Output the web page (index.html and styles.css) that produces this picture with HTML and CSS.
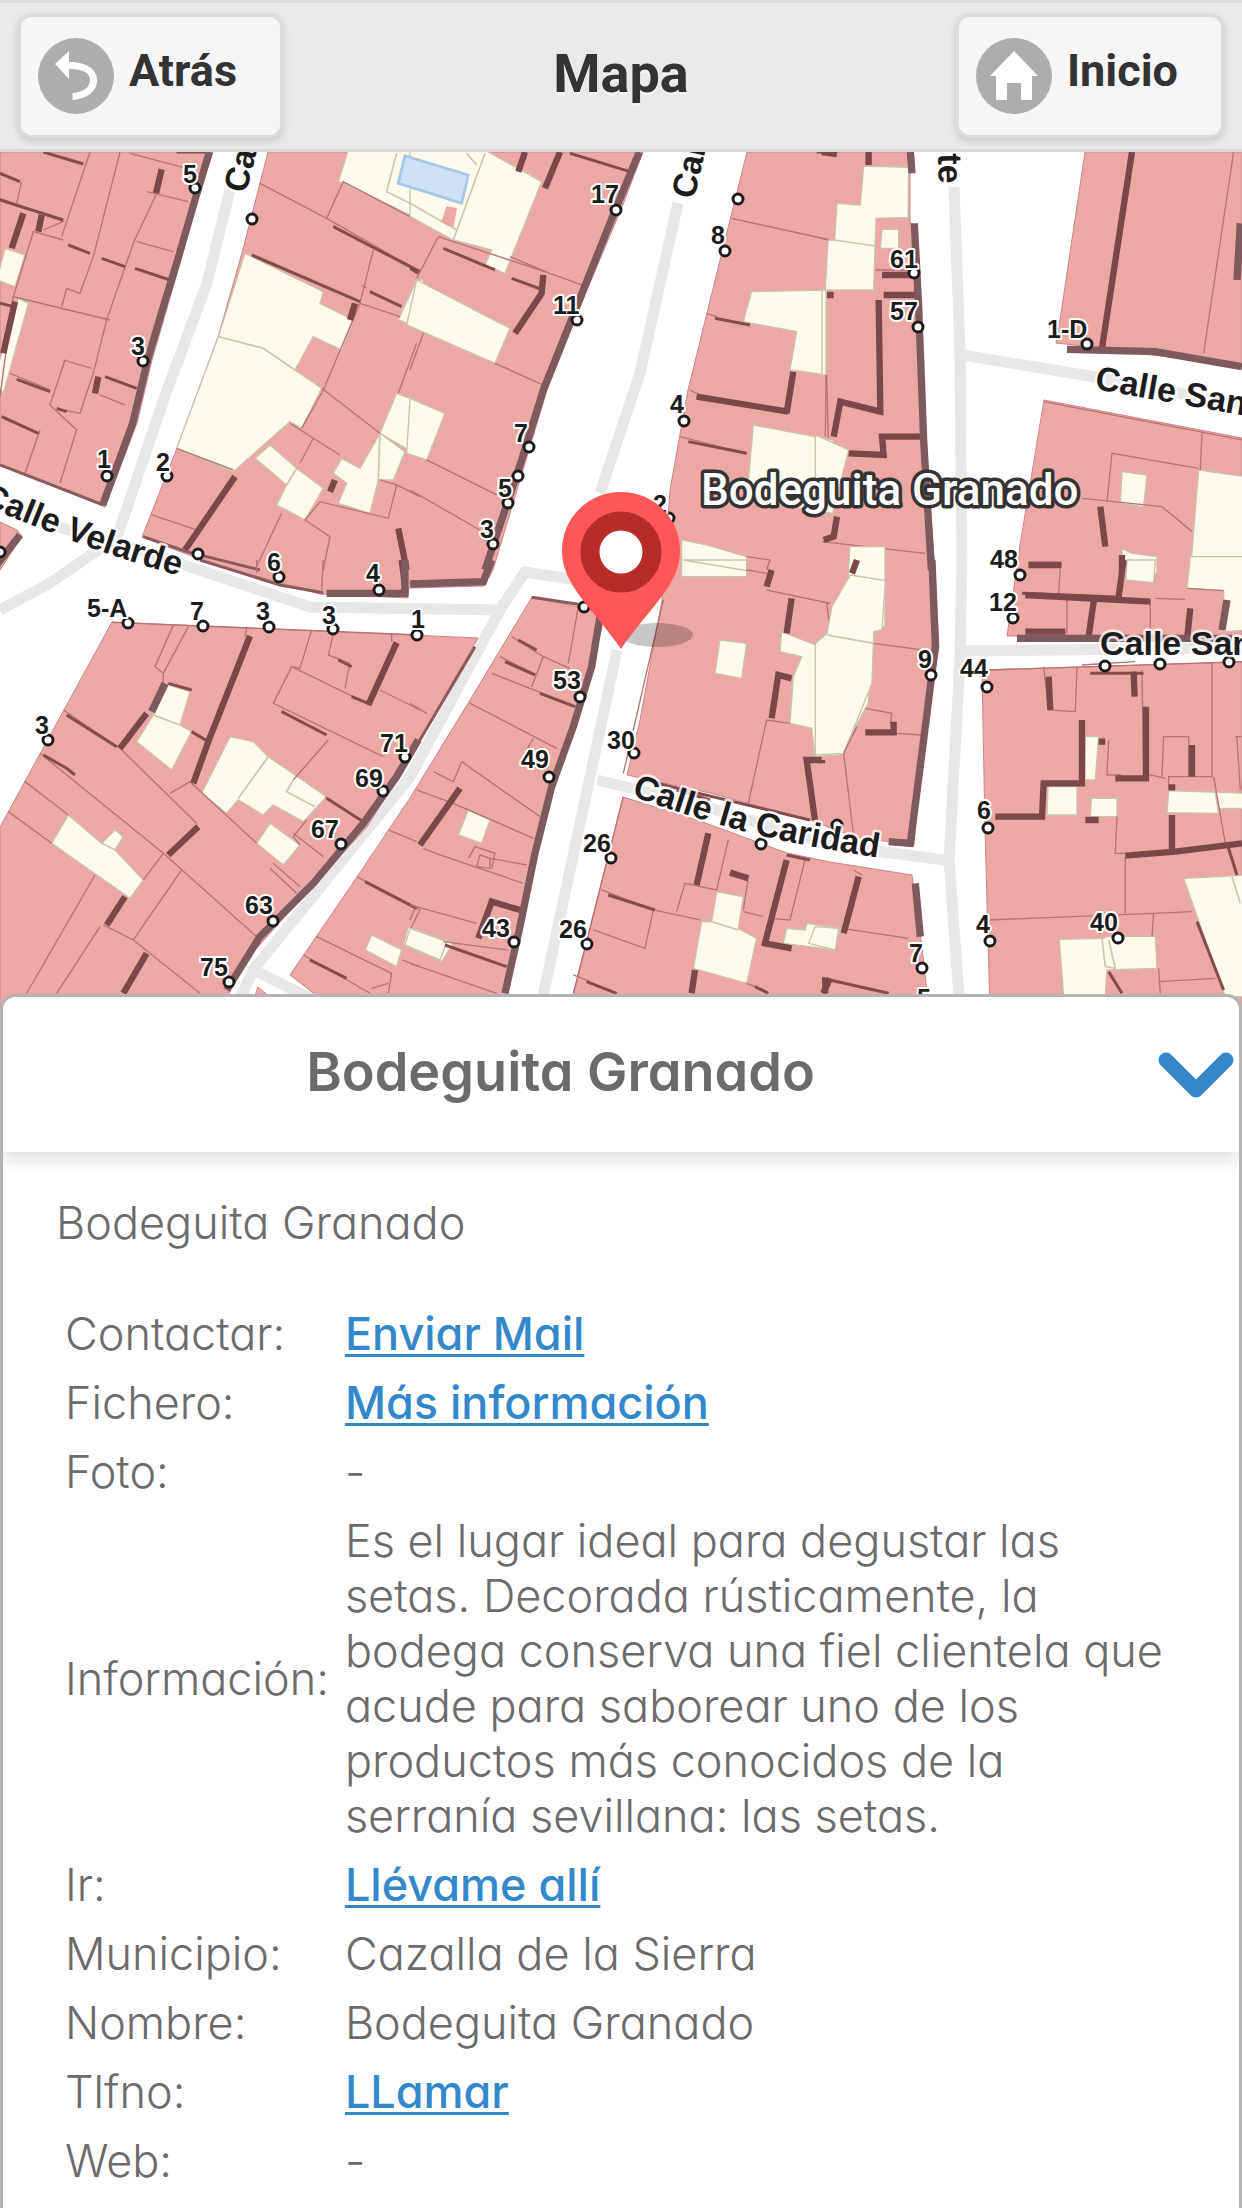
FILE: index.html
```html
<!DOCTYPE html>
<html lang="es">
<head>
<meta charset="utf-8">
<meta name="viewport" content="width=device-width, initial-scale=1">
<title>Mapa</title>
<link rel="stylesheet" href="styles.css">
</head>
<body>
<header class="bar">
  <button class="nav-btn" type="button">
    <svg class="nav-icon" viewBox="0 0 76 76" aria-hidden="true">
      <circle cx="38" cy="38" r="38" fill="#adadad"/>
      <path fill="#fff" d="M17 26 31 13V24C48 24 59 31 59 42C59 54 48 61 34.500 62V55C46 54 52 49 52 42C52 35 46 31 31 31V41Z"/>
    </svg>
    <span class="nav-label">Atrás</span>
  </button>
  <h1 class="bar-title">Mapa</h1>
  <button class="nav-btn nav-end" type="button">
    <svg class="nav-icon" viewBox="0 0 76 76" aria-hidden="true">
      <circle cx="38" cy="38" r="38" fill="#adadad"/>
      <path fill="#fff" d="M38 13 62 38H56V62H45V45H31V62H20V38H14Z"/>
    </svg>
    <span class="nav-label">Inicio</span>
  </button>
</header>

<main>
<section class="map" aria-label="Mapa de calles">
<svg class="map-svg" viewBox="0 152 1242 858" preserveAspectRatio="xMidYMin slice">
  <defs>
    <path id="velarde" d="M-20 504Q60 537 100 551T194 580"/>
    <path id="caridad" d="M631 796Q700 820 750 833T900 861"/>
  </defs>
  <rect y="152" width="1242" height="858" fill="#fff"/>

  <!-- road axes -->
  <g class="road">
    <path d="M230 190 207 283 167 390 117 537 50 583 0 610"/>
    <path d="M40 522 117 543 190 567 310 607 500 610 525 572 577 580 621 590"/>
    <path d="M500 610 410 777 253 970 235 1010M253 970 310 998"/>
    <path d="M678 203 640 373 600 493M617 650 590 777 540 1010"/>
    <path d="M597 780 700 805 830 845 945 860"/>
    <path d="M954 187 960 353 962 560 960 660 949 860 960 1010"/>
    <path d="M962 355 1095 377 1242 405M965 651 1242 648"/>
  </g>

  <!-- building blocks -->
  <g class="block">
    <path d="M0 152H213L197 200 180 263 152 360 137 423 105 507 0 465Z"/>
    <path d="M0 522 17 530 22 536 0 570Z"/>
    <path d="M268 152H643L622 207 587 290 547 390 493 570 484 586 409 588 408 598 320 594 207 562 142 537 177 448 218 337 242 253Z"/>
    <path d="M747 152H910V223L917 225 924 423 935 570 939 647 922 747 914 845 854 837 810 820 710 793 627 775 640 720 662 600 670 490 688 390 707 313 730 220Z"/>
    <path d="M623 797 697 820 787 853 830 862 912 875 922 947 929 1010H570Z"/>
    <path d="M532 597 602 612V627L577 720 555 780 537 853 504 1010H335L290 975 357 877 410 798 470 700Z"/>
    <path d="M112 622 478 638 410 757 367 827 320 877 240 967 222 1010H0V827Z"/>
    <path d="M258 987 285 1010H250Z"/>
    <path d="M1085 152H1242V367L1102 348 1056 343 1060 320Z"/>
    <path d="M1044 400 1242 438V636H1007L1020 545Z"/>
    <path d="M982 670 1242 662V1010H990L985 830Z"/>
  </g>

  <!-- north-west sheet -->
  <g transform="translate(0 140) scale(.3333)">
    <g class="yard">
      <path d="M15 325 75 345 45 440-10 420ZM55 475 85 490 10 760-10 730V690Z"/>
      <path d="M735 340 970 455 960 490 1060 540 1025 630 940 590 885 690 965 745 905 865 870 845 700 995 530 925 655 590Z"/>
      <path d="M1045 30 1015 125 1030 128 1280 250V30ZM1250 420 1195 540 1270 570V420ZM1190 760 1140 880 1270 955V790Z"/>
      <path d="M1140 880 1215 935 1180 1020 1135 1020 1110 1120 1015 1090 1040 1030 1000 1000 1025 955 1080 985ZM810 915 890 985 970 1045 915 1140 830 1095 860 1035 765 955Z"/>
    </g>
    <path class="pool" d="M1215 48 1195 130 1410 188 1440 105Z"/>
    <path class="yline" d="M655 590 790 625 885 690M1190 40 1160 155 1270 210M890 985 860 1035M1140 880 1135 1020"/>
    <path class="thin" d="M270 36 185 290M360 36 280 350 240 460 200 445 185 500M470 160 400 310 320 540 280 700 240 820 190 810M565 185 440 155M410 305 520 335M0 175 190 245 130 270M190 300 100 275 40 470 330 540M190 660 275 685M195 660 150 795 230 870 180 1030M300 765 375 795M30 700 150 750M120 870 75 1000M65 125 50 190M390 40 560 85M40 470 0 770M780 130 980 235 1030 125 1240 235M980 235 1260 395M1120 330 1080 490 970 750 905 865M1080 490 1200 530M1085 435 1100 445M965 745 1140 880M870 850 940 895 900 970M940 895 1020 945M1250 610 1195 760M1140 1020 1190 1035 1165 1135 960 1085 915 1140 990 1190 970 1290M845 1120 765 1290M455 1125 590 1170M1190 1035 1260 1070M530 925 700 990"/>
    <path class="mid" d="M130 36 250 72M0 100 60 125M0 180 190 240M205 315 270 340M305 355 375 380M405 385 510 420M50 718 150 755M315 710 410 745M5 830 115 880M170 805 200 815M530 36H630M0 490 40 500M1000 260 1260 395M755 345 1080 485M1110 455 1205 500"/>
    <path class="dark" d="M70 220 35 325M125 225 115 275M485 88 468 160M295 710 285 760M45 485 10 640M705 1010 555 1230M1065 490 1050 540M1005 1020 990 1055M1195 1165 1220 1290"/>
    <path class="edge" d="M628 36 585 180 530 370 490 500 443 660 398 850 308 1095M60 1185-10 1275"/>
    <path class="mid edge-line" d="M0 975 310 1095M430 1190 560 1235 780 1290"/>
  </g>

  <!-- north sheet -->
  <g transform="translate(410 140) scale(.3333)">
    <g class="yard">
      <path d="M0 30H225L395 125 285 400 225 375 245 330 130 300 0 230ZM20 420 300 565 255 670-10 555ZM0 775 105 820 50 960-10 940Z"/>
      <path d="M1025 455 1250 450V705L1140 690 1160 575 1000 545ZM1030 855 1270 900V1120L1010 1080Z"/>
      <path d="M815 1200 890 1215 1010 1250V1310H815Z"/>
    </g>
    <path class="pool" d="M-15 48-35 130 155 190 175 105Z"/>
    <path class="yline" d="M225 40 130 300M0 190 140 270M170 40 200 75"/>
    <path class="block" d="M110 200 140 205 130 260 95 245Z"/>
    <path class="thin" d="M85 290 20 415M85 290 420 400 530 440M300 350 420 400M40 580 0 690M255 670 410 740M50 960 260 1065M0 1050 210 1170M965 235 1260 300M890 520 920 530M840 750 870 765M1250 705 1255 895M810 890 1010 940M1010 1250 1080 1260 1070 1290"/>
    <path class="mid" d="M480 40 660 95M100 325 255 390M305 415 400 450M0 385 25 400M915 535 1020 555M860 770 1130 815M835 905 1010 940M1220 36H1260"/>
    <path class="dark" d="M345 36 325 95M450 36 405 145M400 405 395 460 315 580M1150 695 1130 820M860 770 1135 815"/>
    <path class="edge" d="M688 36 620 200 520 450 400 750 335 960 285 1110 225 1290"/>
  </g>

  <!-- north-east sheet -->
  <g transform="translate(822 140) scale(.3333)">
    <g class="yard">
      <path d="M125 78 260 82 258 232 162 235 155 450 10 450 18 300 38 300 45 190 115 195Z"/>
      <path d="M180 268H230V325H175ZM0 450H12V705H0ZM-20 885 80 930 45 1070-20 1110Z"/>
      <path d="M900 995 975 1005 965 1100 895 1090ZM1130 990 1270 1010V1300H1105ZM900 1225 930 1240 1005 1250V1300H900Z"/>
    </g>
    <path class="yline" d="M38 300 160 318"/>
    <path class="thin" d="M0 295 20 300M12 705 10 890M160 390H280M1235 36 1145 640M1140 880 1135 990M1130 985 870 940 855 1085M780 1075 1020 1100 1110 1175M665 785 1260 900M0 1205 310 1240"/>
    <path class="dark" d="M140 36V75M0 36 45 42M15 465H35M180 405H290M185 465H285M170 480 175 815 55 785 35 890M80 940 185 945 180 890 300 890M45 1130 35 1190 5 1200M120 1240 95 1300M930 36 840 625M835 1100 850 1220M620 1275H718M900 1245V1300"/>
    <path class="edge" d="M265 36 270 100M277 250 290 500 305 900 328 1290M735 628 1000 635 1260 680M1255 250 1245 420"/>
  </g>

  <!-- south-west sheet -->
  <g transform="translate(0 560) scale(.3333)">
    <g class="yard">
      <path d="M505 375 570 395 540 495 575 515 515 630 410 545 460 465ZM205 765 305 850 345 810 370 830 345 870 430 960 390 1015 155 850Z"/>
      <path d="M690 530 760 545 805 590 980 710 910 785 820 735 790 765 715 720 680 760 605 700ZM810 790 900 855 850 915 770 850Z"/>
      <path d="M1115 1125 1205 1170 1190 1220 1095 1170ZM1225 1100 1360 1150 1325 1205 1210 1155Z"/>
    </g>
    <path class="yline" d="M460 465 540 495M805 590 715 715M880 660 860 695 945 740M305 850 345 870"/>
    <path class="thin" d="M520 195 465 320 490 340 490 375M565 200 490 340M740 200 735 230M935 210 900 325M875 320 820 430 1150 590M875 320 1090 425M900 325 875 320M1000 220 985 285 1050 310 1035 385M1175 220V245M1140 390 1260 450M985 540 880 660M190 450 360 565 590 790M120 580 490 880 770 1130M75 665 205 765M25 755 155 850M285 945 80 1300M510 700 570 665M570 665 770 850M545 930 400 1140M490 880 430 960M300 1100 170 1300M310 1095 400 1140 600 1300M820 910 900 980M810 925 890 1000M880 820 970 890M900 855 880 830 920 780M975 710 1090 785M1165 810 1250 845M950 1130 1175 1240 1165 1300M1070 950 1260 1050 1230 1110M910 1185 1110 1300M1115 1285 1165 1270M1205 1200 1260 1220M970 0 965 90M770 0V40"/>
    <path class="mid" d="M200 465 350 560M130 585 200 625 225 645M575 515 625 545M845 455 980 525M1015 300 1055 320M1055 410 1105 430M980 715 1090 785M1095 965 1250 1045M505 370 575 390M930 1200 1040 1255"/>
    <path class="dark" d="M750 228 625 545 580 670M1190 248 1105 435M440 460 360 565M595 800 505 885M375 1010 320 1095M440 1180 370 1300M1205 0 1215 75"/>
    <path class="edge" d="M495 370 455 455M1255 540 1190 650 1090 790 940 970 780 1130 680 1290M1215 0V100M980 100H1225"/>
    <path class="mid edge-line" d="M600 0 840 75 970 98"/>
    <path class="thin" d="M335 187 1260 225"/>
  </g>

  <!-- south sheet -->
  <g transform="translate(410 560) scale(.3333)">
    <g class="yard">
      <path d="M930 240 1010 250 995 355 915 340ZM820 0H1010V32ZM1115 215 1230 260 1310 120 1320-40 1425-40V200L1390 210 1375 430 1290 585 1215 590 1205 505 1140 490 1150 350 1175 290 1110 275Z"/>
      <path d="M175 750 240 780 215 850 145 825ZM0 1105 110 1145 90 1200-15 1155ZM920 995 1000 1010 985 1105 1040 1135 1010 1270 850 1225 875 1085 905 1085ZM1190 1090 1290 1105 1275 1170 1120 1150 1130 1105 1185 1110Z"/>
    </g>
    <path class="yline" d="M905 1085 985 1110"/>
    <path class="thin" d="M505 140 475 310M305 230 400 290 365 380M400 290 480 325M270 290 380 345M245 340 500 440M180 430 440 565M370 535 350 570M155 605 130 665 70 635M155 605 390 770M20 690 130 730 370 835M40 865 90 885 340 970M175 895 195 860 255 880 245 925M200 920 210 885 240 895V925ZM240 895 350 915M0 1035 200 1090M0 1210 260 1300M0 1080 15 1045M100 1145 290 1170M1070 480 1015 730M1070 480 1140 490M1070 90 1260 130M1250 130 1260 200M1010 30 1070 40M575 990 730 1050 870 1080M730 1050 705 1165 550 1110M800 1055 825 970 920 990 955 840M1015 955 1000 1050M1000 1055 1060 1070M1080 1075 1140 1080 1185 900M0 430 50 460M760 120 640 640M640 710 490 1300M1010 1270 1060 1290M490 1245 540 1265"/>
    <path class="mid" d="M325 240 380 270M285 305 375 345M390 400 495 440M595 1005 735 1050M105 1155 290 1220M530 1265 620 1300M700 660 1200 780M800 690 900 720M1130 885 1200 900M1035 1280 1075 1300"/>
    <path class="dark" d="M150 685 30 855M895 820 860 975M960 938 1015 955M1130 900 1065 1150 1145 1165M1085 30 1070 80M1145 115 1130 220M1145 355 1105 345 1085 475M1235 600 1190 600 1215 780M330 1050 245 1025 205 1135M855 1230 845 1300M1260 1255 1240 1300"/>
    <path class="edge" d="M245 0 220 65 0 72M570 170 545 320 490 500 425 680 375 880 330 1100 285 1300"/>
    <path class="mid edge-line" d="M195 260 0 590M365 112 520 135"/>
  </g>

  <!-- south-east sheet -->
  <g transform="translate(822 560) scale(.3333)">
    <g class="yard">
      <path d="M85 45 190 62 180 210 155 215 150 370 65 580-20 585V250L15 220 30 140Z"/>
      <path d="M915 0H1000L995 68 912 60ZM1105-10H1280V210L1205 215V92L1095 85ZM790 530H830L820 660H788ZM678 680H765V765H675ZM808 715H885V770H805ZM1040 692 1270 700 1265 745 1190 745V760L1035 758Z"/>
      <path d="M1085 955 1280 945V1310H1210ZM712 1138 845 1135 855 1130 1000 1128 1005 1225 855 1230 850 1310H725ZM-20 1100 50 1105 40 1170-40 1150Z"/>
    </g>
    <path class="yline" d="M15 225 155 250M840 1135 850 1220 880 1225 860 1140M1180 695 1190 760M1230 950 1255 1030"/>
    <path class="thin" d="M155 250 340 275M0 125 20 130M130 445 210 460 205 490M225 520 300 525M65 580 95 830M105 500 65 580M60 1105 260 1135M715 25 710 100M735 110V220M985 120V220M1095 85 1205 92M1000 115 1090 118M665 320 680 450 760 455 765 320M1170 310V650H1040V690M1020 650 1025 530H1100V650M960 330 965 640 1030 655M860 540 855 645H900M1175 650 1210 850M1240 530H1260M1245 530 1255 690M885 770 880 880H910M910 890V1065M500 1080 995 1060 1110 1055M995 1060 990 1130M1010 1225 1015 1300M1010 1265 1180 1255M780 315 940 305M500 330 1260 305M95 930 120 945"/>
    <path class="mid" d="M1125 1085 1205 1290M600 100 900 112M805 340H965M1215 850 1245 945M0 1255 200 1300M860 1235 900 1300"/>
    <path class="dark" d="M105 0 90 40M130 517H215V485M110 950 65 1120M620 15H718M610 105 985 125M905 0 890 110M610 215H730M815 125 800 230M1105 145 1095 240M680 350 685 450M780 480V670H665L660 770H520M850 545H830M935 335 938 410M972 440V655H880M1110 555V650M1040 682H1060M790 780H830M1050 765V875M910 887 1060 875 1260 850M10 1255V1300M0 600V610"/>
    <path class="edge" d="M330 0 340 260 310 500 265 850 200 845M1215 120 1200 210M585 235H1230M280 970 295 1130"/>
  </g>

  <!-- house doors and numbers -->
  <g class="door">
    <circle cx="195" cy="188" r="5"/><circle cx="143" cy="361" r="5"/><circle cx="107" cy="476" r="5"/><circle cx="167" cy="476" r="5"/><circle cx="252" cy="219" r="5"/><circle cx="198" cy="554" r="5"/><circle cx="279" cy="577" r="5"/><circle cx="0" cy="552" r="5"/>
    <circle cx="616" cy="210" r="5"/><circle cx="577" cy="320" r="5"/><circle cx="529" cy="447" r="5"/><circle cx="518" cy="476" r="5"/><circle cx="508" cy="503" r="5"/><circle cx="493" cy="544" r="5"/><circle cx="725" cy="251" r="5"/><circle cx="738" cy="199" r="5"/><circle cx="684" cy="421" r="5"/><circle cx="669" cy="518" r="5"/>
    <circle cx="914" cy="273" r="5"/><circle cx="918" cy="327" r="5"/><circle cx="1087" cy="344" r="5"/><circle cx="1020" cy="575" r="5"/>
    <circle cx="128" cy="623" r="5"/><circle cx="203" cy="626" r="5"/><circle cx="269" cy="627" r="5"/><circle cx="333" cy="629" r="5"/><circle cx="417" cy="635" r="5"/><circle cx="379" cy="590" r="5"/><circle cx="48" cy="740" r="5"/><circle cx="405" cy="757" r="5"/><circle cx="383" cy="791" r="5"/><circle cx="341" cy="844" r="5"/><circle cx="273" cy="921" r="5"/><circle cx="229" cy="982" r="5"/>
    <circle cx="584" cy="607" r="5"/><circle cx="580" cy="697" r="5"/><circle cx="549" cy="777" r="5"/><circle cx="634" cy="753" r="5"/><circle cx="611" cy="858" r="5"/><circle cx="587" cy="944" r="5"/><circle cx="514" cy="942" r="5"/><circle cx="761" cy="844" r="5"/>
    <circle cx="1013" cy="618" r="5"/><circle cx="931" cy="675" r="5"/><circle cx="987" cy="687" r="5"/><circle cx="988" cy="828" r="5"/><circle cx="990" cy="941" r="5"/><circle cx="1118" cy="938" r="5"/><circle cx="922" cy="968" r="5"/><circle cx="1105" cy="666" r="5"/><circle cx="1160" cy="664" r="5"/><circle cx="1229" cy="662" r="5"/><circle cx="837" cy="825" r="5"/>
  </g>
  <g class="num">
    <text x="183" y="183">5</text><text x="131" y="355">3</text><text x="97" y="468">1</text><text x="156" y="471">2</text><text x="267" y="571">6</text>
    <text x="591" y="203">17</text><text x="553" y="314">11</text><text x="514" y="442">7</text><text x="498" y="497">5</text><text x="480" y="538">3</text><text x="711" y="244">8</text><text x="670" y="413">4</text><text x="653" y="513">2</text>
    <text x="890" y="268">61</text><text x="890" y="320">57</text><text x="1047" y="338">1-D</text><text x="990" y="568">48</text>
    <text x="87" y="617">5-A</text><text x="190" y="620">7</text><text x="256" y="620">3</text><text x="322" y="624">3</text><text x="411" y="628">1</text><text x="366" y="582">4</text><text x="35" y="734">3</text><text x="380" y="752">71</text><text x="355" y="787">69</text><text x="311" y="838">67</text><text x="245" y="914">63</text><text x="200" y="976">75</text>
    <text x="553" y="689">53</text><text x="521" y="768">49</text><text x="607" y="749">30</text><text x="583" y="852">26</text><text x="559" y="938">26</text><text x="482" y="937">43</text>
    <text x="989" y="611">12</text><text x="918" y="668">9</text><text x="960" y="677">44</text><text x="977" y="819">6</text><text x="976" y="933">4</text><text x="1090" y="931">40</text><text x="909" y="962">7</text><text x="917" y="1007">5</text>
  </g>
  <g class="street">
    <text><textPath href="#velarde">Calle Velarde</textPath></text>
    <text><textPath href="#caridad">Calle la Caridad</textPath></text>
    <text transform="translate(1094 389) rotate(10)">Calle San</text>
    <text transform="translate(1100 655)">Calle San</text>
    <text transform="translate(246 194) rotate(-76)">Ca</text>
    <text transform="translate(694 200) rotate(-77)">Cal</text>
    <text transform="translate(939 184) rotate(88)" text-anchor="end">te</text>
  </g>

  <!-- selected place -->
  <ellipse cx="657" cy="635" rx="36" ry="12" fill="#000" fill-opacity=".22"/>
  <path d="M621 492C654 492 680 518 680 551C680 585 650 607 621 649C592 607 562 585 562 551C562 518 588 492 621 492Z" fill="#ff5656"/>
  <circle cx="621" cy="552" r="31" fill="#fff" stroke="#b62b2c" stroke-width="19"/>
  <text class="place" x="701" y="505">Bodeguita Granado</text>
</svg>
</section>

<section class="panel">
  <header class="panel-head">
    <h2 class="panel-title">Bodeguita Granado</h2>
    <button class="toggle" type="button" aria-label="Plegar">
      <svg class="chevron" viewBox="0 0 76 46" aria-hidden="true"><path d="M8 8 38 38 68 8" fill="none" stroke="#3388cc" stroke-width="15" stroke-linecap="round" stroke-linejoin="round"/></svg>
    </button>
  </header>
  <div class="panel-body">
    <p class="lead">Bodeguita Granado</p>
    <table class="facts">
      <tr><th scope="row">Contactar:</th><td><a href="#mail">Enviar Mail</a></td></tr>
      <tr><th scope="row">Fichero:</th><td><a href="#info">Más información</a></td></tr>
      <tr><th scope="row">Foto:</th><td>-</td></tr>
      <tr><th scope="row">Información:</th><td>Es el lugar ideal para degustar las setas. Decorada rústicamente, la bodega conserva una fiel clientela que acude para saborear uno de los productos más conocidos de la serranía sevillana: las setas.</td></tr>
      <tr><th scope="row">Ir:</th><td><a href="#ir">Llévame allí</a></td></tr>
      <tr><th scope="row">Municipio:</th><td>Cazalla de la Sierra</td></tr>
      <tr><th scope="row">Nombre:</th><td>Bodeguita Granado</td></tr>
      <tr><th scope="row">Tlfno:</th><td><a href="#llamar">LLamar</a></td></tr>
      <tr><th scope="row">Web:</th><td>-</td></tr>
    </table>
  </div>
</section>
</main>
</body>
</html>
```
FILE: styles.css
```css
* { box-sizing: border-box; }

body {
  margin: 0;
  min-height: 100vh;
  display: flex;
  flex-direction: column;
  background: #fff;
  color: #6b6b6b;
  font-family: Inter, "Open Sans", sans-serif;
  font-size: 45px;
  font-weight: 300;
  line-height: 55px;
  font-feature-settings: "cv11";
}

main {
  flex: 1;
  display: flex;
  flex-direction: column;
}

/* top bar */
.bar {
  display: grid;
  grid-template-columns: 1fr auto 1fr;
  align-items: center;
  padding: 11px 18px;
  background: #e9e9e9;
  border-top: 3px solid #dcdcdc;
  border-bottom: 3px solid #dadada;
  color: #333;
  font-family: Roboto, sans-serif;
  font-feature-settings: normal;
}

.bar-title {
  margin: 0;
  padding-bottom: 4px;
  font-size: 54px;
  font-weight: 700;
  line-height: 64px;
  text-shadow: 0 3px 0 #f3f3f3;
}

.nav-btn {
  display: flex;
  align-items: center;
  justify-self: start;
  gap: 15px;
  padding: 21px 43px 21px 17px;
  border: 3px solid #dcdcdc;
  border-radius: 14px;
  background: #f6f6f6;
  box-shadow: 0 3px 9px rgba(0, 0, 0, .15);
  color: #333;
  font: 700 45px/54px Roboto, sans-serif;
}

.nav-end { justify-self: end; }

.nav-icon {
  display: block;
  width: 76px;
  height: 76px;
}

.nav-label { padding-bottom: 10px; }

/* map */
.map {
  width: 100%;
  aspect-ratio: 1242 / 858;
}

.map-svg {
  display: block;
  width: 100%;
  height: 100%;
}

.road { fill: none; stroke: #e7e7e7; stroke-width: 11; stroke-linejoin: round; }
.block { fill: #eda8a6; stroke: #c98488; stroke-width: 1; }
.yard { fill: #fefaec; stroke: #c9c3ae; stroke-width: 4; }
.pool { fill: #cfe0f4; stroke: #a5c8e6; stroke-width: 8; }
.yline { fill: none; stroke: #c9c6b4; stroke-width: 5; }
.thin { fill: none; stroke: #b97175; stroke-width: 4; }
.mid { fill: none; stroke: #854c50; stroke-width: 9; }
.dark { fill: none; stroke: #7c474a; stroke-width: 19; }
.edge { fill: none; stroke: #7d5a5e; stroke-width: 22; }
.edge-line { stroke: #8b5a5f; }

.door circle {
  fill: #fff;
  stroke: #1c1c1c;
  stroke-width: 3;
}

.num text {
  fill: #1c1c1c;
  stroke: #fff;
  stroke-width: 4;
  stroke-linejoin: round;
  paint-order: stroke;
  font: 700 25px "Liberation Sans", sans-serif;
}

.street text {
  fill: #1c1c1c;
  stroke: #fff;
  stroke-width: 5;
  stroke-opacity: .8;
  stroke-linejoin: round;
  paint-order: stroke;
  font: 700 34px "Liberation Sans", sans-serif;
}

.place {
  fill: #fff;
  stroke: #333;
  stroke-width: 7;
  stroke-linejoin: round;
  paint-order: stroke;
  font: 500 44px Roboto, sans-serif;
}

/* detail panel */
.panel {
  position: relative;
  flex: 1;
  margin-top: -16px;
  border: 3px solid #b4b4b4;
  border-bottom: 0;
  border-radius: 15px 15px 0 0;
  background: #fff;
}

.panel-head {
  display: flex;
  align-items: center;
  padding: 42px 5px 42px 0;
  border-radius: 15px 15px 0 0;
  box-shadow: 0 6px 18px rgba(0, 0, 0, .15);
  clip-path: inset(0 0 -30px 0);
}

.panel-title {
  flex: 1;
  margin: 0;
  padding: 0 40px 6px 0;
  font-size: 54px;
  font-weight: 600;
  line-height: 65px;
  text-align: center;
}

.toggle {
  display: flex;
  padding: 0;
  border: 0;
  background: none;
}

.chevron {
  display: block;
  width: 76px;
  height: 46px;
}

.panel-body { padding: 43px 53px 15px; }

.lead { margin: 0 0 49px; }

.facts {
  width: 100%;
  padding-left: 9px;
  border-collapse: separate;
  border-spacing: 0;
}

.facts th,
.facts td {
  padding: 7px 0;
  text-align: left;
  vertical-align: middle;
  font-weight: 300;
}

.facts th {
  padding-right: 16px;
  white-space: nowrap;
}

.facts td { width: 100%; }

.facts a {
  color: #3388cc;
  font-weight: 500;
  text-decoration: underline;
  text-decoration-thickness: 3px;
  text-decoration-skip-ink: none;
  text-underline-offset: 4px;
}
```
